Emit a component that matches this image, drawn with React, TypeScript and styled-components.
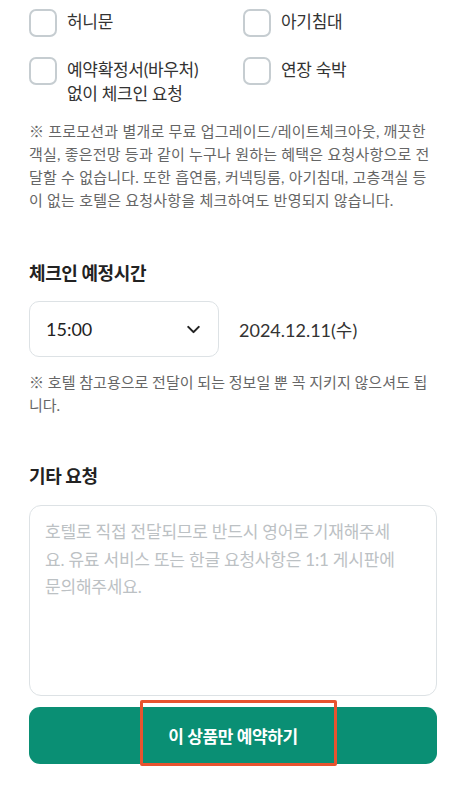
import React, { useState } from 'react'
import styled, { createGlobalStyle } from 'styled-components'
import { ChevronDown } from 'lucide-react'

const GlobalStyle = createGlobalStyle`
  * { box-sizing: border-box; }
  body {
    margin: 0;
    background: #fff;
    font-family: Lato, "Noto Sans CJK KR", sans-serif;
    color: #222;
  }
`

const Page = styled.div`
  width: 466px;
  padding: 9px 29px 0;
`

const OptionGrid = styled.div`
  display: grid;
  grid-template-columns: 214px 1fr;
  row-gap: 20px;
`

const Option = styled.label`
  display: flex;
  align-items: flex-start;
  gap: 10px;
  cursor: pointer;
`

const Box = styled.span<{ checked: boolean }>`
  flex: none;
  width: 28px;
  height: 28px;
  border: 2.5px solid ${({ checked }) => (checked ? '#0a8f74' : '#c6cdd1')};
  background: ${({ checked }) => (checked ? '#0a8f74' : '#fff')};
  border-radius: 7px;
`

const OptionText = styled.span`
  font-size: 17px;
  line-height: 24px;
  padding-top: 1px;
  color: #333;
  letter-spacing: -0.3px;
`

const Note = styled.p<{ top: number; spacing?: number }>`
  margin: ${({ top }) => top}px 0 0;
  font-size: 15px;
  line-height: 23px;
  color: #666;
  letter-spacing: ${({ spacing = 0 }) => spacing}px;
  word-break: break-all;
`

const Heading = styled.h3<{ top: number }>`
  margin: ${({ top }) => top}px 0 0;
  font-size: 18px;
  line-height: 26px;
  font-weight: 700;
  color: #222;
  letter-spacing: -0.4px;
`

const TimeRow = styled.div`
  display: flex;
  align-items: center;
  gap: 20px;
  margin-top: 15px;
`

const Select = styled.div`
  display: flex;
  align-items: center;
  justify-content: space-between;
  width: 190px;
  height: 56px;
  padding: 0 14px 0 16px;
  border: 1px solid #dde2e5;
  border-radius: 10px;
  font-size: 18px;
  color: #222;
`

const DateText = styled.span`
  font-size: 18px;
  color: #333;
`

const TextArea = styled.textarea`
  display: block;
  width: 100%;
  height: 191px;
  margin-top: 16px;
  padding: 12px 15px;
  border: 1px solid #dde2e5;
  border-radius: 12px;
  resize: none;
  font-family: Lato, "Noto Sans CJK KR", sans-serif;
  font-size: 17px;
  line-height: 27.5px;
  letter-spacing: -0.2px;
  outline: none;
  &::placeholder {
    color: #bcc1c4;
  }
`

const Footer = styled.div`
  padding: 11px 0 30px;
  background: #fff;
`

const ReserveButton = styled.button`
  position: relative;
  width: 100%;
  height: 57px;
  border: none;
  border-radius: 11px;
  background: #0a8f74;
  color: #fff;
  font-family: Lato, "Noto Sans CJK KR", sans-serif;
  font-size: 17px;
  font-weight: 700;
  letter-spacing: -0.4px;
  cursor: pointer;
`

const Highlight = styled.span`
  position: absolute;
  left: 111px;
  top: -7px;
  width: 197px;
  height: 66px;
  border: 3px solid #e8532f;
  border-radius: 2px;
  pointer-events: none;
`

const OPTIONS = ['허니문', '아기침대', '예약확정서(바우처)\n없이 체크인 요청', '연장 숙박']

const PLACEHOLDER =
  '호텔로 직접 전달되므로 반드시 영어로 기재해주세\n요. 유료 서비스 또는 한글 요청사항은 1:1 게시판에\n문의해주세요.'

export default function App() {
  const [checked, setChecked] = useState<Record<number, boolean>>({})

  return (
    <Page>
      <GlobalStyle />
      <OptionGrid>
        {OPTIONS.map((label, i) => (
          <Option key={label} onClick={() => setChecked(c => ({ ...c, [i]: !c[i] }))}>
            <Box checked={!!checked[i]} />
            <OptionText>
              {label.split('\n').map((line, j) => (
                <React.Fragment key={j}>
                  {j > 0 && <br />}
                  {line}
                </React.Fragment>
              ))}
            </OptionText>
          </Option>
        ))}
      </OptionGrid>

      <Note top={14} spacing={0.22}>
        ※ 프로모션과 별개로 무료 업그레이드/레이트체크아웃, 깨끗한 객실, 좋은전망 등과 같이 누구나 원하는 혜택은 요청사항으로 전달할 수 없습니다. 또한 흡연룸, 커넥팅룸, 아기침대, 고층객실 등이 없는 호텔은 요청사항을 체크하여도 반영되지 않습니다.
      </Note>

      <Heading top={48}>체크인 예정시간</Heading>
      <TimeRow>
        <Select>
          <span>15:00</span>
          <ChevronDown size={21} strokeWidth={2.4} color="#222" />
        </Select>
        <DateText>2024.12.11(수)</DateText>
      </TimeRow>
      <Note top={14}>※ 호텔 참고용으로 전달이 되는 정보일 뿐 꼭 지키지 않으셔도 됩니다.</Note>

      <Heading top={46}>기타 요청</Heading>
      <TextArea placeholder={PLACEHOLDER} />

      <Footer>
        <ReserveButton>
          이 상품만 예약하기
          <Highlight />
        </ReserveButton>
      </Footer>
    </Page>
  )
}
